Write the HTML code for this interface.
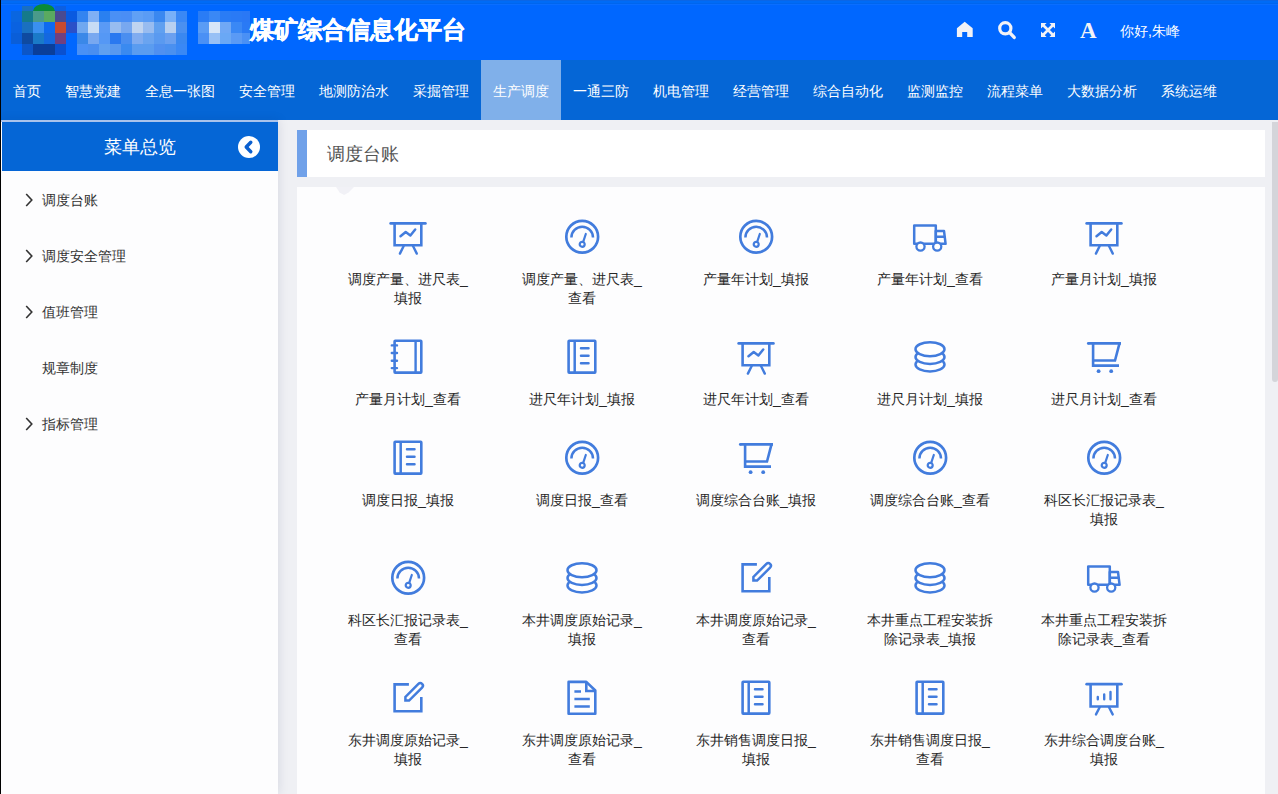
<!DOCTYPE html>
<html><head><meta charset="utf-8">
<style>
*{margin:0;padding:0;box-sizing:border-box}
html,body{width:1278px;height:794px;overflow:hidden;background:#eff0f4;font-family:"Liberation Sans",sans-serif}
#blk{position:absolute;left:0;top:0;width:1px;height:794px;background:#000;z-index:5}
#hdr{position:absolute;left:0;top:0;width:1278px;height:60px;background:#0067ff}
#hdr .tl{position:absolute;left:0;top:0;width:1278px;height:1px;background:#0a60e8}
#mos div{position:absolute}
#title{position:absolute;left:250px;top:14px;font-size:24px;font-weight:bold;-webkit-text-stroke:0.5px #fff;color:#fff;line-height:32px;white-space:nowrap;letter-spacing:0px}
#hicons svg{position:absolute}
#user{position:absolute;left:1120px;top:21px;font-size:14px;color:#fff;line-height:20px;white-space:nowrap}
#nav{position:absolute;left:1px;top:60px;height:60px;width:1277px;background:#0566d6;white-space:nowrap;font-size:0}
.ni{display:inline-block;height:60px;line-height:62px;padding:0 12px;font-size:14px;color:#fff}
.ni.act{background:#80b0ea}
#side{position:absolute;left:1px;top:120px;width:277px;height:674px;background:#fdfdfe;box-shadow:1px 0 10px rgba(20,30,80,0.10)}
#sline{position:absolute;left:1px;top:120px;width:277px;height:2px;background:#a9c3ec}
#shd{position:absolute;left:2px;top:122px;width:276px;height:49px;background:#0566d6}
#shd .t{position:absolute;left:0;width:276px;top:12px;text-align:center;font-size:18px;color:#fff;line-height:26px}
.chev{position:absolute;left:24px}
.si{position:absolute;left:42px;font-size:14px;color:#333;line-height:20px;white-space:nowrap}
#tbox{position:absolute;left:297px;top:130px;width:968px;height:47px;background:#fff}
#tbar{position:absolute;left:297px;top:130px;width:10px;height:47px;background:#70a1e9}
#ttext{position:absolute;left:327px;top:141px;font-size:18px;color:#555;line-height:26px}
#panel{position:absolute;left:297px;top:187px;width:968px;height:607px;background:#fdfdfe}
#sb{position:absolute;left:1272px;top:122px;width:6px;height:260px;background:#d4d5da;border-radius:0 0 3px 3px}
.ic{position:absolute;color:#427cdd;overflow:visible}
.lb{position:absolute;width:130px;text-align:center;font-size:14px;line-height:19px;color:#262626}
</style></head><body>
<div id="hdr"><div style="position:absolute;left:0;top:0;width:1278px;height:1px;background:#0b66e6"></div><div style="position:absolute;left:0;top:1px;width:1278px;height:2px;background:#006bf6"></div><div style="position:absolute;left:0;top:3px;width:1278px;height:1px;background:#0066ee"></div><div style="position:absolute;left:0;top:4px;width:1278px;height:1px;background:#0a6eff"></div></div>
<div id="mos">
<div style="left:22px;top:6px;width:11px;height:5px;background:#1a6fc0"></div>
<div style="left:33px;top:4px;width:22px;height:7px;background:#0a8a3a;border-radius:11px 11px 0 0/7px 7px 0 0"></div>
<div style="left:55px;top:6px;width:11px;height:5px;background:#0d5fe0"></div>
<div style="left:11px;top:11px;width:11px;height:11px;background:#0a66e0"></div>
<div style="left:22px;top:11px;width:11px;height:11px;background:#157a8a"></div>
<div style="left:33px;top:11px;width:11px;height:11px;background:#4a9a8a"></div>
<div style="left:44px;top:11px;width:11px;height:11px;background:#5aaa60"></div>
<div style="left:55px;top:11px;width:11px;height:11px;background:#4a4a90"></div>
<div style="left:66px;top:11px;width:11px;height:11px;background:#0a5ae0"></div>
<div style="left:11px;top:22px;width:11px;height:11px;background:#0a62e0"></div>
<div style="left:22px;top:22px;width:11px;height:11px;background:#1a70c0"></div>
<div style="left:33px;top:22px;width:11px;height:11px;background:#3a90f0"></div>
<div style="left:44px;top:22px;width:11px;height:11px;background:#0f6af0"></div>
<div style="left:55px;top:22px;width:11px;height:11px;background:#c84a30"></div>
<div style="left:66px;top:22px;width:11px;height:11px;background:#2a50c8"></div>
<div style="left:11px;top:33px;width:11px;height:11px;background:#0a5ed8"></div>
<div style="left:22px;top:33px;width:11px;height:11px;background:#0f4aa0"></div>
<div style="left:33px;top:33px;width:11px;height:11px;background:#1a7ac8"></div>
<div style="left:44px;top:33px;width:11px;height:11px;background:#1468e0"></div>
<div style="left:55px;top:33px;width:11px;height:11px;background:#704080"></div>
<div style="left:22px;top:44px;width:11px;height:11px;background:#0c56c8"></div>
<div style="left:33px;top:44px;width:11px;height:11px;background:#0a3e9a"></div>
<div style="left:44px;top:44px;width:11px;height:11px;background:#0a3e9a"></div>
<div style="left:55px;top:44px;width:11px;height:11px;background:#0a50d0"></div>
<div style="left:77px;top:11px;width:11px;height:11px;background:#3384f0"></div>
<div style="left:88px;top:11px;width:11px;height:11px;background:#80b0f5"></div>
<div style="left:99px;top:11px;width:11px;height:11px;background:#2a80f0"></div>
<div style="left:110px;top:11px;width:11px;height:11px;background:#4a90f5"></div>
<div style="left:121px;top:11px;width:11px;height:11px;background:#4a8ef5"></div>
<div style="left:132px;top:11px;width:11px;height:11px;background:#60a0f5"></div>
<div style="left:143px;top:11px;width:11px;height:11px;background:#5a9cf5"></div>
<div style="left:154px;top:11px;width:11px;height:11px;background:#3a88f0"></div>
<div style="left:165px;top:11px;width:11px;height:11px;background:#78b0f8"></div>
<div style="left:176px;top:11px;width:11px;height:11px;background:#3a88f5"></div>
<div style="left:77px;top:22px;width:11px;height:11px;background:#70a8f0"></div>
<div style="left:88px;top:22px;width:11px;height:11px;background:#c8dcf5"></div>
<div style="left:99px;top:22px;width:11px;height:11px;background:#5a9af5"></div>
<div style="left:110px;top:22px;width:11px;height:11px;background:#98bcf0"></div>
<div style="left:121px;top:22px;width:11px;height:11px;background:#78a8f0"></div>
<div style="left:132px;top:22px;width:11px;height:11px;background:#c0d4f0"></div>
<div style="left:143px;top:22px;width:11px;height:11px;background:#98bcf0"></div>
<div style="left:154px;top:22px;width:11px;height:11px;background:#60a0f0"></div>
<div style="left:165px;top:22px;width:11px;height:11px;background:#b8d0f0"></div>
<div style="left:176px;top:22px;width:11px;height:11px;background:#4a90f0"></div>
<div style="left:77px;top:33px;width:11px;height:11px;background:#3a88e8"></div>
<div style="left:88px;top:33px;width:11px;height:11px;background:#78a8f0"></div>
<div style="left:99px;top:33px;width:11px;height:11px;background:#5598f5"></div>
<div style="left:110px;top:33px;width:11px;height:11px;background:#2a78f0"></div>
<div style="left:121px;top:33px;width:11px;height:11px;background:#4a8ef0"></div>
<div style="left:132px;top:33px;width:11px;height:11px;background:#80acf0"></div>
<div style="left:143px;top:33px;width:11px;height:11px;background:#6aa4f0"></div>
<div style="left:154px;top:33px;width:11px;height:11px;background:#5a9af0"></div>
<div style="left:165px;top:33px;width:11px;height:11px;background:#6aa0f0"></div>
<div style="left:176px;top:33px;width:11px;height:11px;background:#3a88f0"></div>
<div style="left:77px;top:44px;width:11px;height:11px;background:#4a90f5"></div>
<div style="left:88px;top:44px;width:11px;height:11px;background:#4a8ef0"></div>
<div style="left:99px;top:44px;width:11px;height:11px;background:#60a0f0"></div>
<div style="left:110px;top:44px;width:11px;height:11px;background:#5898f0"></div>
<div style="left:121px;top:44px;width:11px;height:11px;background:#3a8af0"></div>
<div style="left:132px;top:44px;width:11px;height:11px;background:#5a9cf0"></div>
<div style="left:143px;top:44px;width:11px;height:11px;background:#5a9cf0"></div>
<div style="left:154px;top:44px;width:11px;height:11px;background:#5090f0"></div>
<div style="left:165px;top:44px;width:11px;height:11px;background:#4a90f0"></div>
<div style="left:176px;top:44px;width:11px;height:11px;background:#3a88f5"></div>
<div style="left:198px;top:11px;width:11px;height:11px;background:#2a7cf5"></div>
<div style="left:209px;top:11px;width:11px;height:11px;background:#3a88f5"></div>
<div style="left:220px;top:11px;width:11px;height:11px;background:#2a7cf5"></div>
<div style="left:231px;top:11px;width:11px;height:11px;background:#2a7af5"></div>
<div style="left:242px;top:11px;width:8px;height:11px;background:#2a78f5"></div>
<div style="left:198px;top:22px;width:11px;height:11px;background:#5a9cf5"></div>
<div style="left:209px;top:22px;width:11px;height:11px;background:#d8e6f8"></div>
<div style="left:220px;top:22px;width:11px;height:11px;background:#70a8f5"></div>
<div style="left:231px;top:22px;width:11px;height:11px;background:#3a88f5"></div>
<div style="left:242px;top:22px;width:8px;height:11px;background:#2a7af5"></div>
<div style="left:198px;top:33px;width:11px;height:11px;background:#4a90f5"></div>
<div style="left:209px;top:33px;width:11px;height:11px;background:#98c0f5"></div>
<div style="left:220px;top:33px;width:11px;height:11px;background:#6aa8f5"></div>
<div style="left:231px;top:33px;width:11px;height:11px;background:#5a9af5"></div>
<div style="left:242px;top:33px;width:8px;height:11px;background:#4a90f5"></div>
</div>
<div id="title">煤矿综合信息化平台</div>
<div id="hicons">
<svg style="left:956px;top:21px" width="18" height="17" viewBox="0 0 18 17"><path d="M8.7 0.8 L16.7 7.2 V16 H11.2 V11 H6.2 V16 H0.9 V7.2 Z" fill="#f2f2f6"/></svg>
<svg style="left:996px;top:20px" width="22" height="20" viewBox="0 0 22 20"><circle cx="9.3" cy="8.3" r="5.6" fill="none" stroke="#f2f2f6" stroke-width="3.2"/><path d="M13.4 12.4 L18.2 17.4" stroke="#f2f2f6" stroke-width="3.4" stroke-linecap="round"/></svg>
<svg style="left:1041px;top:23px" width="14" height="14" viewBox="0 0 14 14"><path d="M0 0 H5.6 L0 5.6 Z M14 0 V5.6 L8.4 0 Z M14 14 H8.4 L14 8.4 Z M0 14 V8.4 L5.6 14 Z" fill="#f2f2f6"/><path d="M1.5 1.5 L12.5 12.5 M12.5 1.5 L1.5 12.5" stroke="#f2f2f6" stroke-width="2.6"/></svg>
<div style="position:absolute;left:1080px;top:19px;font-family:'Liberation Serif',serif;font-weight:bold;font-size:23px;color:#f2f2f6;line-height:24px">A</div>
</div>
<div id="user">你好,朱峰</div>
<div id="nav"><span class="ni">首页</span><span class="ni">智慧党建</span><span class="ni">全息一张图</span><span class="ni">安全管理</span><span class="ni">地测防治水</span><span class="ni">采掘管理</span><span class="ni act">生产调度</span><span class="ni">一通三防</span><span class="ni">机电管理</span><span class="ni">经营管理</span><span class="ni">综合自动化</span><span class="ni">监测监控</span><span class="ni">流程菜单</span><span class="ni">大数据分析</span><span class="ni">系统运维</span></div>
<div id="side">
</div>
<div id="sline"></div>
<div id="shd"><div class="t">菜单总览</div>
<svg style="position:absolute;left:236px;top:14px" width="22" height="22" viewBox="0 0 22 22"><circle cx="11" cy="11" r="11" fill="#fff"/><path d="M12.8 6.2 L8.2 11 L12.8 15.8" fill="none" stroke="#0a5fcf" stroke-width="3.4" stroke-linecap="round" stroke-linejoin="round"/></svg>
</div>
<svg class="chev" style="top:193px" width="10" height="14" viewBox="0 0 10 14"><path d="M2.2 1 L7.8 7 L2.2 13" fill="none" stroke="#333" stroke-width="1.6"/></svg><div class="si" style="top:190px">调度台账</div><svg class="chev" style="top:249px" width="10" height="14" viewBox="0 0 10 14"><path d="M2.2 1 L7.8 7 L2.2 13" fill="none" stroke="#333" stroke-width="1.6"/></svg><div class="si" style="top:246px">调度安全管理</div><svg class="chev" style="top:305px" width="10" height="14" viewBox="0 0 10 14"><path d="M2.2 1 L7.8 7 L2.2 13" fill="none" stroke="#333" stroke-width="1.6"/></svg><div class="si" style="top:302px">值班管理</div><div class="si" style="top:358px">规章制度</div><svg class="chev" style="top:417px" width="10" height="14" viewBox="0 0 10 14"><path d="M2.2 1 L7.8 7 L2.2 13" fill="none" stroke="#333" stroke-width="1.6"/></svg><div class="si" style="top:414px">指标管理</div>
<div id="tbox"></div><div id="tbar"></div><div id="ttext">调度台账</div>
<div id="panel"></div><div style="position:absolute;left:336px;top:187px;width:18px;height:8px;background:#f1f1f6;clip-path:polygon(0 0,100% 0,70% 70%,45% 100%,20% 70%)"></div>
<div id="sb"></div>
<svg class="ic" style="left:386px;top:215px" width="44" height="44" viewBox="-22 -22 44 44"><path d="M-17.3 -13.6 H17.4" fill="none" stroke="currentColor" stroke-width="2.8" stroke-linecap="round"/>
<path d="M-13.4 -13.6 V8.3 H13.3 V-13.6" fill="none" stroke="currentColor" stroke-width="2.6"/>
<path d="M-4.3 9 L-8.1 16.6 M5 9 L8.8 16.6" fill="none" stroke="currentColor" stroke-width="2.4" stroke-linecap="round"/>
<path d="M-7.5 -0.8 L-2.3 -5 L2.4 -1.5 L7.2 -7.5" fill="none" stroke="currentColor" stroke-width="2.5" stroke-linecap="round" stroke-linejoin="round"/></svg><div class="lb" style="left:343px;top:270px">调度产量、进尺表_填报</div><svg class="ic" style="left:560px;top:215px" width="44" height="44" viewBox="-22 -22 44 44"><circle cx="0.2" cy="-0.2" r="15.9" fill="none" stroke="currentColor" stroke-width="2.7"/>
<path d="M-10.6 0.6 A10.8 10.8 0 0 1 11 0.6" fill="none" stroke="currentColor" stroke-width="2.5"/>
<circle cx="0.2" cy="7.3" r="2.5" fill="none" stroke="currentColor" stroke-width="2.2"/>
<path d="M1.2 4.8 L3.8 -3" fill="none" stroke="currentColor" stroke-width="2.2" stroke-linecap="round"/></svg><div class="lb" style="left:517px;top:270px">调度产量、进尺表_查看</div><svg class="ic" style="left:734px;top:215px" width="44" height="44" viewBox="-22 -22 44 44"><circle cx="0.2" cy="-0.2" r="15.9" fill="none" stroke="currentColor" stroke-width="2.7"/>
<path d="M-10.6 0.6 A10.8 10.8 0 0 1 11 0.6" fill="none" stroke="currentColor" stroke-width="2.5"/>
<circle cx="0.2" cy="7.3" r="2.5" fill="none" stroke="currentColor" stroke-width="2.2"/>
<path d="M1.2 4.8 L3.8 -3" fill="none" stroke="currentColor" stroke-width="2.2" stroke-linecap="round"/></svg><div class="lb" style="left:691px;top:270px">产量年计划_填报</div><svg class="ic" style="left:908px;top:215px" width="44" height="44" viewBox="-22 -22 44 44"><path d="M5.8 6.8 H-15.8 V-11.6 H5.8 Z" fill="none" stroke="currentColor" stroke-width="2.5" stroke-linejoin="round"/>
<path d="M5.8 -6.1 H14 L15.6 6.8 H5.8 Z M5.8 -0.2 H14.7" fill="none" stroke="currentColor" stroke-width="2.5" stroke-linejoin="round"/>
<circle cx="-9.5" cy="9.6" r="4.1" fill="#fff" stroke="currentColor" stroke-width="2.3"/>
<circle cx="7.2" cy="9.6" r="4.1" fill="#fff" stroke="currentColor" stroke-width="2.3"/></svg><div class="lb" style="left:865px;top:270px">产量年计划_查看</div><svg class="ic" style="left:1082px;top:215px" width="44" height="44" viewBox="-22 -22 44 44"><path d="M-17.3 -13.6 H17.4" fill="none" stroke="currentColor" stroke-width="2.8" stroke-linecap="round"/>
<path d="M-13.4 -13.6 V8.3 H13.3 V-13.6" fill="none" stroke="currentColor" stroke-width="2.6"/>
<path d="M-4.3 9 L-8.1 16.6 M5 9 L8.8 16.6" fill="none" stroke="currentColor" stroke-width="2.4" stroke-linecap="round"/>
<path d="M-7.5 -0.8 L-2.3 -5 L2.4 -1.5 L7.2 -7.5" fill="none" stroke="currentColor" stroke-width="2.5" stroke-linecap="round" stroke-linejoin="round"/></svg><div class="lb" style="left:1039px;top:270px">产量月计划_填报</div><svg class="ic" style="left:386px;top:335px" width="44" height="44" viewBox="-22 -22 44 44"><rect x="-13.4" y="-16.2" width="26.7" height="31.8" rx="0.6" fill="none" stroke="currentColor" stroke-width="2.6"/>
<path d="M7.6 -16 V15.5" fill="none" stroke="currentColor" stroke-width="2.4"/>
<path d="M-16.2 -11.6 H-11 M-16.2 -4 H-11 M-16.2 3.7 H-11 M-16.2 11.1 H-11" fill="none" stroke="currentColor" stroke-width="2.4" stroke-linecap="round"/></svg><div class="lb" style="left:343px;top:390px">产量月计划_查看</div><svg class="ic" style="left:560px;top:335px" width="44" height="44" viewBox="-22 -22 44 44"><rect x="-13.4" y="-16.2" width="26.7" height="31.8" rx="0.6" fill="none" stroke="currentColor" stroke-width="2.6"/>
<path d="M-7.3 -16 V15.5" fill="none" stroke="currentColor" stroke-width="2.5"/>
<path d="M-1 -8.7 H6.5 M-1 -1.2 H6.5 M-1 6.2 H6.5" fill="none" stroke="currentColor" stroke-width="2.5" stroke-linecap="round"/></svg><div class="lb" style="left:517px;top:390px">进尺年计划_填报</div><svg class="ic" style="left:734px;top:335px" width="44" height="44" viewBox="-22 -22 44 44"><path d="M-17.3 -13.6 H17.4" fill="none" stroke="currentColor" stroke-width="2.8" stroke-linecap="round"/>
<path d="M-13.4 -13.6 V8.3 H13.3 V-13.6" fill="none" stroke="currentColor" stroke-width="2.6"/>
<path d="M-4.3 9 L-8.1 16.6 M5 9 L8.8 16.6" fill="none" stroke="currentColor" stroke-width="2.4" stroke-linecap="round"/>
<path d="M-7.5 -0.8 L-2.3 -5 L2.4 -1.5 L7.2 -7.5" fill="none" stroke="currentColor" stroke-width="2.5" stroke-linecap="round" stroke-linejoin="round"/></svg><div class="lb" style="left:691px;top:390px">进尺年计划_查看</div><svg class="ic" style="left:908px;top:335px" width="44" height="44" viewBox="-22 -22 44 44"><ellipse cx="0" cy="7.6" rx="14.5" ry="6.9" fill="#fff" stroke="currentColor" stroke-width="2.5"/>
<ellipse cx="0" cy="0.1" rx="14.5" ry="6.9" fill="#fff" stroke="currentColor" stroke-width="2.5"/>
<ellipse cx="0" cy="-7.8" rx="14.5" ry="7" fill="#fff" stroke="currentColor" stroke-width="2.5"/></svg><div class="lb" style="left:865px;top:390px">进尺月计划_填报</div><svg class="ic" style="left:1082px;top:335px" width="44" height="44" viewBox="-22 -22 44 44"><path d="M-15.7 -13.6 H17" fill="none" stroke="currentColor" stroke-width="2.8"/><circle cx="-15.7" cy="-13.6" r="1.4" fill="currentColor"/>
<path d="M-10.9 -13.6 V8.6 H15" fill="none" stroke="currentColor" stroke-width="2.6"/>
<path d="M-10.9 3.5 H11 L15.5 -13.6" fill="none" stroke="currentColor" stroke-width="2.6"/>
<circle cx="-5.4" cy="14.2" r="1.9" fill="currentColor"/>
<circle cx="7.2" cy="14.2" r="1.9" fill="currentColor"/></svg><div class="lb" style="left:1039px;top:390px">进尺月计划_查看</div><svg class="ic" style="left:386px;top:436px" width="44" height="44" viewBox="-22 -22 44 44"><rect x="-13.4" y="-16.2" width="26.7" height="31.8" rx="0.6" fill="none" stroke="currentColor" stroke-width="2.6"/>
<path d="M-7.3 -16 V15.5" fill="none" stroke="currentColor" stroke-width="2.5"/>
<path d="M-1 -8.7 H6.5 M-1 -1.2 H6.5 M-1 6.2 H6.5" fill="none" stroke="currentColor" stroke-width="2.5" stroke-linecap="round"/></svg><div class="lb" style="left:343px;top:491px">调度日报_填报</div><svg class="ic" style="left:560px;top:436px" width="44" height="44" viewBox="-22 -22 44 44"><circle cx="0.2" cy="-0.2" r="15.9" fill="none" stroke="currentColor" stroke-width="2.7"/>
<path d="M-10.6 0.6 A10.8 10.8 0 0 1 11 0.6" fill="none" stroke="currentColor" stroke-width="2.5"/>
<circle cx="0.2" cy="7.3" r="2.5" fill="none" stroke="currentColor" stroke-width="2.2"/>
<path d="M1.2 4.8 L3.8 -3" fill="none" stroke="currentColor" stroke-width="2.2" stroke-linecap="round"/></svg><div class="lb" style="left:517px;top:491px">调度日报_查看</div><svg class="ic" style="left:734px;top:436px" width="44" height="44" viewBox="-22 -22 44 44"><path d="M-15.7 -13.6 H17" fill="none" stroke="currentColor" stroke-width="2.8"/><circle cx="-15.7" cy="-13.6" r="1.4" fill="currentColor"/>
<path d="M-10.9 -13.6 V8.6 H15" fill="none" stroke="currentColor" stroke-width="2.6"/>
<path d="M-10.9 3.5 H11 L15.5 -13.6" fill="none" stroke="currentColor" stroke-width="2.6"/>
<circle cx="-5.4" cy="14.2" r="1.9" fill="currentColor"/>
<circle cx="7.2" cy="14.2" r="1.9" fill="currentColor"/></svg><div class="lb" style="left:691px;top:491px">调度综合台账_填报</div><svg class="ic" style="left:908px;top:436px" width="44" height="44" viewBox="-22 -22 44 44"><circle cx="0.2" cy="-0.2" r="15.9" fill="none" stroke="currentColor" stroke-width="2.7"/>
<path d="M-10.6 0.6 A10.8 10.8 0 0 1 11 0.6" fill="none" stroke="currentColor" stroke-width="2.5"/>
<circle cx="0.2" cy="7.3" r="2.5" fill="none" stroke="currentColor" stroke-width="2.2"/>
<path d="M1.2 4.8 L3.8 -3" fill="none" stroke="currentColor" stroke-width="2.2" stroke-linecap="round"/></svg><div class="lb" style="left:865px;top:491px">调度综合台账_查看</div><svg class="ic" style="left:1082px;top:436px" width="44" height="44" viewBox="-22 -22 44 44"><circle cx="0.2" cy="-0.2" r="15.9" fill="none" stroke="currentColor" stroke-width="2.7"/>
<path d="M-10.6 0.6 A10.8 10.8 0 0 1 11 0.6" fill="none" stroke="currentColor" stroke-width="2.5"/>
<circle cx="0.2" cy="7.3" r="2.5" fill="none" stroke="currentColor" stroke-width="2.2"/>
<path d="M1.2 4.8 L3.8 -3" fill="none" stroke="currentColor" stroke-width="2.2" stroke-linecap="round"/></svg><div class="lb" style="left:1039px;top:491px">科区长汇报记录表_填报</div><svg class="ic" style="left:386px;top:556px" width="44" height="44" viewBox="-22 -22 44 44"><circle cx="0.2" cy="-0.2" r="15.9" fill="none" stroke="currentColor" stroke-width="2.7"/>
<path d="M-10.6 0.6 A10.8 10.8 0 0 1 11 0.6" fill="none" stroke="currentColor" stroke-width="2.5"/>
<circle cx="0.2" cy="7.3" r="2.5" fill="none" stroke="currentColor" stroke-width="2.2"/>
<path d="M1.2 4.8 L3.8 -3" fill="none" stroke="currentColor" stroke-width="2.2" stroke-linecap="round"/></svg><div class="lb" style="left:343px;top:611px">科区长汇报记录表_查看</div><svg class="ic" style="left:560px;top:556px" width="44" height="44" viewBox="-22 -22 44 44"><ellipse cx="0" cy="7.6" rx="14.5" ry="6.9" fill="#fff" stroke="currentColor" stroke-width="2.5"/>
<ellipse cx="0" cy="0.1" rx="14.5" ry="6.9" fill="#fff" stroke="currentColor" stroke-width="2.5"/>
<ellipse cx="0" cy="-7.8" rx="14.5" ry="7" fill="#fff" stroke="currentColor" stroke-width="2.5"/></svg><div class="lb" style="left:517px;top:611px">本井调度原始记录_填报</div><svg class="ic" style="left:734px;top:556px" width="44" height="44" viewBox="-22 -22 44 44"><path d="M0.9 -13.6 H-13.4 V13.3 H13.3 V-1" fill="none" stroke="currentColor" stroke-width="2.6"/>
<g transform="translate(-2.6 2.6) rotate(-45)"><path d="M0 0 L2.6 -2.6 H21 A2.6 2.6 0 0 1 21 2.6 H2.6 Z" fill="none" stroke="currentColor" stroke-width="2.5"/></g></svg><div class="lb" style="left:691px;top:611px">本井调度原始记录_查看</div><svg class="ic" style="left:908px;top:556px" width="44" height="44" viewBox="-22 -22 44 44"><ellipse cx="0" cy="7.6" rx="14.5" ry="6.9" fill="#fff" stroke="currentColor" stroke-width="2.5"/>
<ellipse cx="0" cy="0.1" rx="14.5" ry="6.9" fill="#fff" stroke="currentColor" stroke-width="2.5"/>
<ellipse cx="0" cy="-7.8" rx="14.5" ry="7" fill="#fff" stroke="currentColor" stroke-width="2.5"/></svg><div class="lb" style="left:865px;top:611px">本井重点工程安装拆除记录表_填报</div><svg class="ic" style="left:1082px;top:556px" width="44" height="44" viewBox="-22 -22 44 44"><path d="M5.8 6.8 H-15.8 V-11.6 H5.8 Z" fill="none" stroke="currentColor" stroke-width="2.5" stroke-linejoin="round"/>
<path d="M5.8 -6.1 H14 L15.6 6.8 H5.8 Z M5.8 -0.2 H14.7" fill="none" stroke="currentColor" stroke-width="2.5" stroke-linejoin="round"/>
<circle cx="-9.5" cy="9.6" r="4.1" fill="#fff" stroke="currentColor" stroke-width="2.3"/>
<circle cx="7.2" cy="9.6" r="4.1" fill="#fff" stroke="currentColor" stroke-width="2.3"/></svg><div class="lb" style="left:1039px;top:611px">本井重点工程安装拆除记录表_查看</div><svg class="ic" style="left:386px;top:676px" width="44" height="44" viewBox="-22 -22 44 44"><path d="M0.9 -13.6 H-13.4 V13.3 H13.3 V-1" fill="none" stroke="currentColor" stroke-width="2.6"/>
<g transform="translate(-2.6 2.6) rotate(-45)"><path d="M0 0 L2.6 -2.6 H21 A2.6 2.6 0 0 1 21 2.6 H2.6 Z" fill="none" stroke="currentColor" stroke-width="2.5"/></g></svg><div class="lb" style="left:343px;top:731px">东井调度原始记录_填报</div><svg class="ic" style="left:560px;top:676px" width="44" height="44" viewBox="-22 -22 44 44"><path d="M4.3 -16.1 H-13.4 V15.8 H13.3 V-7.5 Z" fill="none" stroke="currentColor" stroke-width="2.6" stroke-linejoin="round"/>
<path d="M4.3 -16 V-7 H13.2" fill="none" stroke="currentColor" stroke-width="2.6"/>
<path d="M-7.6 -6.6 H-1 M-7.6 1.1 H7.8 M-7.6 8.5 H7.8" fill="none" stroke="currentColor" stroke-width="2.5"/></svg><div class="lb" style="left:517px;top:731px">东井调度原始记录_查看</div><svg class="ic" style="left:734px;top:676px" width="44" height="44" viewBox="-22 -22 44 44"><rect x="-13.4" y="-16.2" width="26.7" height="31.8" rx="0.6" fill="none" stroke="currentColor" stroke-width="2.6"/>
<path d="M-7.3 -16 V15.5" fill="none" stroke="currentColor" stroke-width="2.5"/>
<path d="M-1 -8.7 H6.5 M-1 -1.2 H6.5 M-1 6.2 H6.5" fill="none" stroke="currentColor" stroke-width="2.5" stroke-linecap="round"/></svg><div class="lb" style="left:691px;top:731px">东井销售调度日报_填报</div><svg class="ic" style="left:908px;top:676px" width="44" height="44" viewBox="-22 -22 44 44"><rect x="-13.4" y="-16.2" width="26.7" height="31.8" rx="0.6" fill="none" stroke="currentColor" stroke-width="2.6"/>
<path d="M-7.3 -16 V15.5" fill="none" stroke="currentColor" stroke-width="2.5"/>
<path d="M-1 -8.7 H6.5 M-1 -1.2 H6.5 M-1 6.2 H6.5" fill="none" stroke="currentColor" stroke-width="2.5" stroke-linecap="round"/></svg><div class="lb" style="left:865px;top:731px">东井销售调度日报_查看</div><svg class="ic" style="left:1082px;top:676px" width="44" height="44" viewBox="-22 -22 44 44"><path d="M-17.3 -13.8 H17.4" fill="none" stroke="currentColor" stroke-width="2.8" stroke-linecap="round"/>
<path d="M-13.4 -13.8 V8.5 H13.3 V-13.8" fill="none" stroke="currentColor" stroke-width="2.6"/>
<path d="M-4.3 9.2 L-8 16.4 M5 9.2 L8.7 16.4" fill="none" stroke="currentColor" stroke-width="2.4" stroke-linecap="round"/>
<path d="M-6.2 -1 V1.2 M0.2 -3.5 V1.2 M6.5 -6 V1.2" fill="none" stroke="currentColor" stroke-width="2.4" stroke-linecap="round"/></svg><div class="lb" style="left:1039px;top:731px">东井综合调度台账_填报</div>
<div id="blk"></div>
</body></html>
